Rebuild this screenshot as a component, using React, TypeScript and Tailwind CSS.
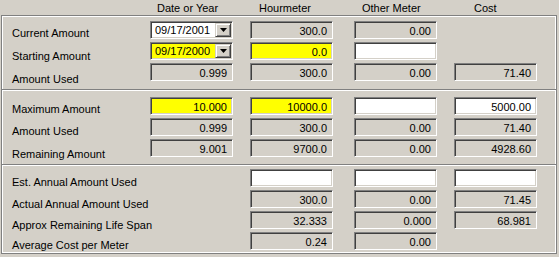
type Kind = "ro" | "edit" | "yellow" | "combo" | "comboY" | null;
type Cell = { kind: Kind; value?: string };
type Row = { label: string; labelMt: string; cells: Cell[] };

const sunken =
  "border border-t-[#808080] border-l-[#808080] border-b-white border-r-white shadow-[inset_1px_1px_0_#404040,inset_-1px_-1px_0_#d4d0c8]";

const DropButton = () => (
  <div className="w-[16px] h-[14px] flex items-center justify-center bg-[#d4d0c8] border border-t-[#d4d0c8] border-l-[#d4d0c8] border-b-[#404040] border-r-[#404040] shadow-[inset_1px_1px_0_#fff,inset_-1px_-1px_0_#808080]">
    <svg width="7" height="4" viewBox="0 0 7 4">
      <path d="M0 0h7L3.5 4z" fill="#000" />
    </svg>
  </div>
);

const Field = ({ cell, className }: { cell: Cell; className: string }) => {
  if (!cell.kind) return <div className={`w-[83px] h-[18px] ${className}`} />;
  if (cell.kind === "combo" || cell.kind === "comboY") {
    return (
      <div
        className={`w-[83px] h-[18px] flex items-center pr-[1px] ${sunken} ${className} ${
          cell.kind === "comboY" ? "bg-[#ffff00]" : "bg-white"
        }`}
      >
        <span className="flex-1 pl-[4px] leading-[13px]">{cell.value}</span>
        <DropButton />
      </div>
    );
  }
  const bg =
    cell.kind === "yellow" ? "bg-[#ffff00]" : cell.kind === "edit" ? "bg-white" : "bg-[#d4d0c8]";
  return (
    <div className={`w-[83px] h-[18px] pt-[3px] pr-[5px] text-right leading-[13px] ${sunken} ${bg} ${className}`}>
      {cell.value}
    </div>
  );
};

const sections: { pt: string; h: string; rows: Row[] }[] = [
  {
    pt: "pt-[5px]",
    h: "h-[73px]",
    rows: [
      {
        label: "Current Amount",
        labelMt: "mt-[11px]",
        cells: [{ kind: "combo", value: "09/17/2001" }, { kind: "ro", value: "300.0" }, { kind: "ro", value: "0.00" }, { kind: null }],
      },
      {
        label: "Starting Amount",
        labelMt: "mt-[10px]",
        cells: [{ kind: "comboY", value: "09/17/2000" }, { kind: "yellow", value: "0.0" }, { kind: "edit" }, { kind: null }],
      },
      {
        label: "Amount Used",
        labelMt: "mt-[10px]",
        cells: [{ kind: "ro", value: "0.999" }, { kind: "ro", value: "300.0" }, { kind: "ro", value: "0.00" }, { kind: "ro", value: "71.40" }],
      },
    ],
  },
  {
    pt: "pt-[6px]",
    h: "h-[73px]",
    rows: [
      {
        label: "Maximum Amount",
        labelMt: "mt-[12px]",
        cells: [{ kind: "yellow", value: "10.000" }, { kind: "yellow", value: "10000.0" }, { kind: "edit" }, { kind: "edit", value: "5000.00" }],
      },
      {
        label: "Amount Used",
        labelMt: "mt-[9px]",
        cells: [{ kind: "ro", value: "0.999" }, { kind: "ro", value: "300.0" }, { kind: "ro", value: "0.00" }, { kind: "ro", value: "71.40" }],
      },
      {
        label: "Remaining Amount",
        labelMt: "mt-[10px]",
        cells: [{ kind: "ro", value: "9.001" }, { kind: "ro", value: "9700.0" }, { kind: "ro", value: "0.00" }, { kind: "ro", value: "4928.60" }],
      },
    ],
  },
  {
    pt: "pt-[3px]",
    h: "h-[87px]",
    rows: [
      {
        label: "Est. Annual Amount Used",
        labelMt: "mt-[10px]",
        cells: [{ kind: null }, { kind: "edit" }, { kind: "edit" }, { kind: "edit" }],
      },
      {
        label: "Actual Annual Amount Used",
        labelMt: "mt-[9px]",
        cells: [{ kind: null }, { kind: "ro", value: "300.0" }, { kind: "ro", value: "0.00" }, { kind: "ro", value: "71.45" }],
      },
      {
        label: "Approx Remaining Life Span",
        labelMt: "mt-[8px]",
        cells: [{ kind: null }, { kind: "ro", value: "32.333" }, { kind: "ro", value: "0.000" }, { kind: "ro", value: "68.981" }],
      },
      {
        label: "Average Cost per Meter",
        labelMt: "mt-[7px]",
        cells: [{ kind: null }, { kind: "ro", value: "0.24" }, { kind: "ro", value: "0.00" }, { kind: null }],
      },
    ],
  },
];

const gaps = ["", "ml-[17px]", "ml-[21px]", "ml-[17px]"];

const Separator = () => <div className="h-[2px] border-t border-[#808080] bg-white" />;

export default function App() {
  return (
    <div className="w-[559px] h-[257px] bg-[#d4d0c8] text-black text-[11px] font-['Liberation_Sans',Arial,sans-serif] overflow-hidden">
      <div className="flex h-[15px] pt-[2px] pl-[157px] leading-[13px]">
        <span className="w-[102px]">Date or Year</span>
        <span className="w-[103px]">Hourmeter</span>
        <span className="w-[112px]">Other Meter</span>
        <span>Cost</span>
      </div>
      <div className="ml-[1px] w-[556px] h-[239px] border border-[#808080] shadow-[inset_1px_1px_0_#fff,inset_-1px_-1px_0_#fff]">
        {sections.map((s, i) => (
          <div key={i}>
            {i > 0 && <Separator />}
            <div className={`flex ${s.h}`}>
              <div className="w-[148px] pl-[10px] flex flex-col">
                {s.rows.map((r) => (
                  <span key={r.label} className={`h-[13px] leading-[13px] whitespace-nowrap ${r.labelMt}`}>
                    {r.label}
                  </span>
                ))}
              </div>
              <div className={`flex flex-col gap-[3px] ${s.pt}`}>
                {s.rows.map((r) => (
                  <div key={r.label} className="flex">
                    {r.cells.map((c, j) => (
                      <Field key={j} cell={c} className={gaps[j]} />
                    ))}
                  </div>
                ))}
              </div>
            </div>
          </div>
        ))}
      </div>
    </div>
  );
}
